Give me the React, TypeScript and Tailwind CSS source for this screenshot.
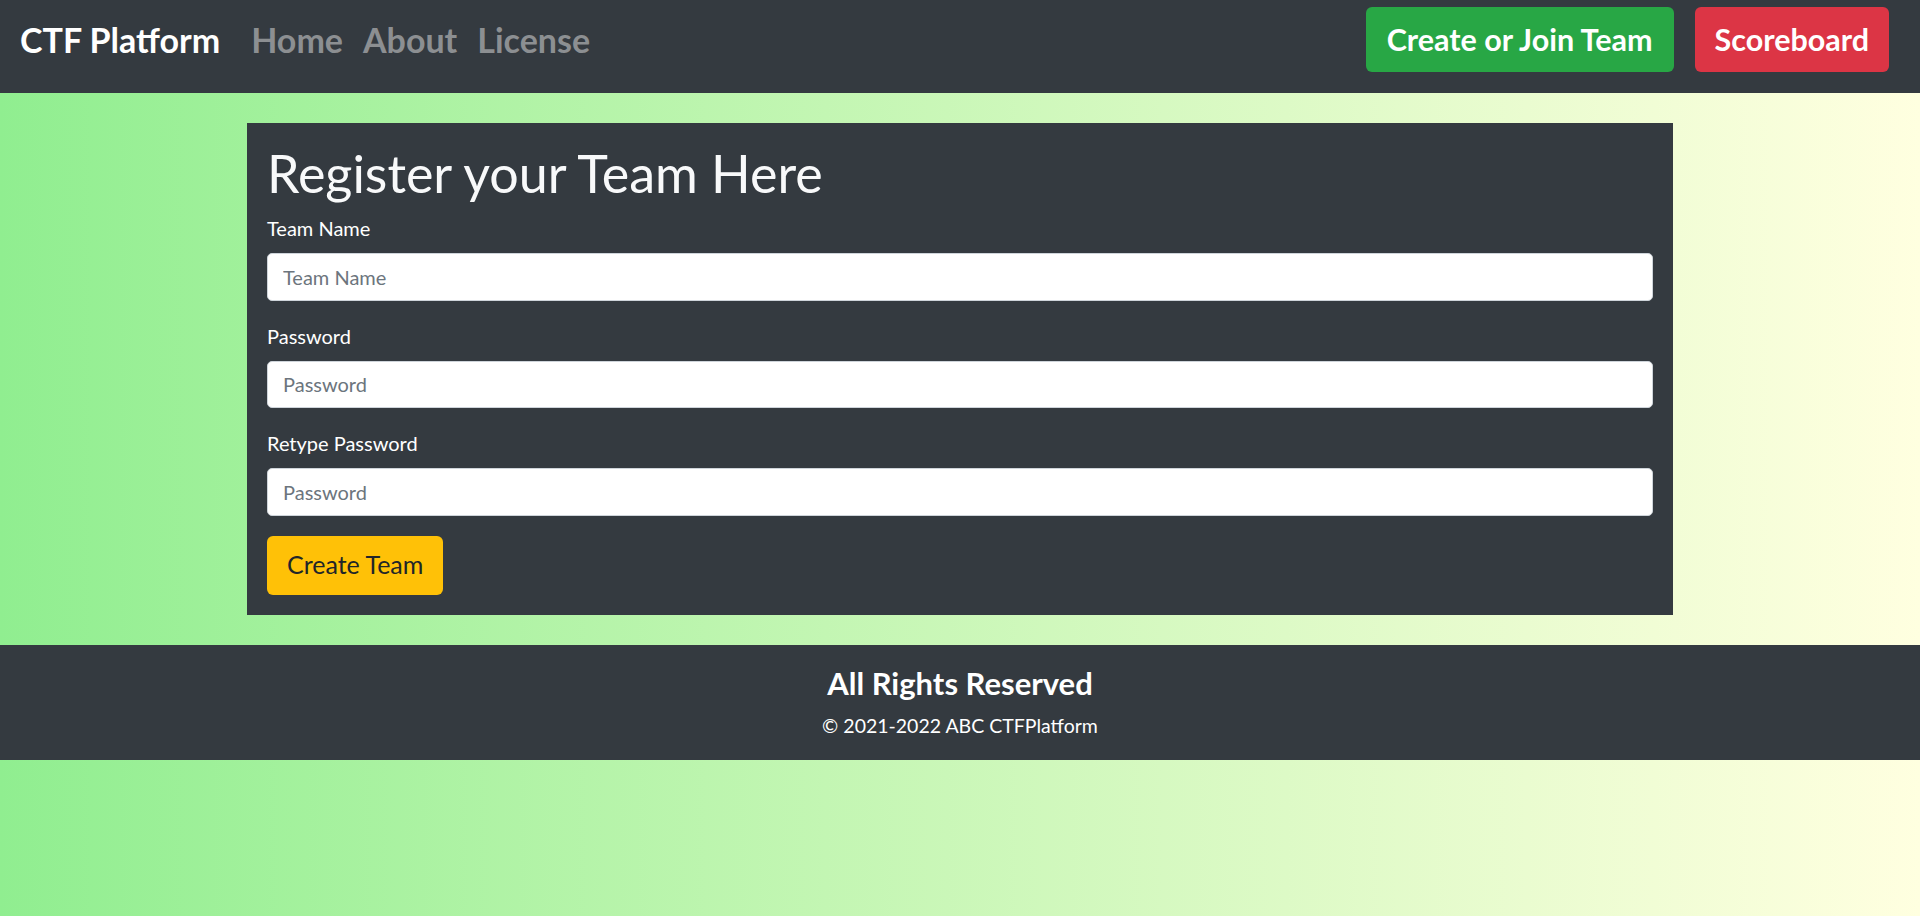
export default function App() {
  return (
    <div className="min-h-screen bg-linear-to-r from-[#90ee90] to-[#ffffe0] font-['Lato',sans-serif]">

      <nav className="h-[93px] bg-[#343a40] flex items-start justify-between pt-[7px] pl-[20px] pr-[31px]">
        <div className="h-[65px] flex items-center">
          <span className="text-white text-[34px] font-bold mr-[31px]">
            CTF Platform
          </span>
          <div className="flex items-center gap-[20px] text-[34px] font-bold text-[#8c8f92]">
            <a className="cursor-pointer">Home</a>
            <a className="cursor-pointer">About</a>
            <a className="cursor-pointer">License</a>
          </div>
        </div>

        <div className="flex items-center gap-[21px]">
          <button className="h-[65px] px-[21px] rounded-[6px] bg-[#28a745] text-white text-[30.5px] font-bold">
            Create or Join Team
          </button>
          <button className="h-[65px] px-[20px] rounded-[6px] bg-[#dc3545] text-white text-[30.5px] font-bold">
            Scoreboard
          </button>
        </div>
      </nav>

      <div className="w-[1426px] mx-auto mt-[30px] bg-[#343a40] p-[20px]">

        <h1 className="text-[#f8f9fa] text-[52px] leading-[60px] mb-[10px]">
          Register your Team Here
        </h1>

        <div className="mb-[20px]">
          <label className="block text-white text-[20px] leading-[30px] mb-[10px]">
            Team Name
          </label>
          <input
            type="text"
            placeholder="Team Name"
            className="w-full h-[47.5px] px-[15px] text-[20px] bg-white rounded-[5px] border border-[#ced4da] placeholder:text-[#6c757d] outline-none"
          />
        </div>

        <div className="mb-[20px]">
          <label className="block text-white text-[20px] leading-[30px] mb-[10px]">
            Password
          </label>
          <input
            type="password"
            placeholder="Password"
            className="w-full h-[47.5px] px-[15px] text-[20px] bg-white rounded-[5px] border border-[#ced4da] placeholder:text-[#6c757d] outline-none"
          />
        </div>

        <div className="mb-[20px]">
          <label className="block text-white text-[20px] leading-[30px] mb-[10px]">
            Retype Password
          </label>
          <input
            type="password"
            placeholder="Password"
            className="w-full h-[47.5px] px-[15px] text-[20px] bg-white rounded-[5px] border border-[#ced4da] placeholder:text-[#6c757d] outline-none"
          />
        </div>

        <button className="h-[59px] px-[20px] rounded-[6px] bg-[#ffc107] text-[#212529] text-[25px]">
          Create Team
        </button>

      </div>

      <footer className="mt-[30px] bg-[#343a40] pt-[20px] pb-[19px] text-center text-white">
        <h4 className="text-[31px] leading-[36px] font-bold mb-[10px]">
          All Rights Reserved
        </h4>
        <p className="text-[19.5px] leading-[30px]">
          © 2021-2022 ABC CTFPlatform
        </p>
      </footer>

    </div>
  );
}
